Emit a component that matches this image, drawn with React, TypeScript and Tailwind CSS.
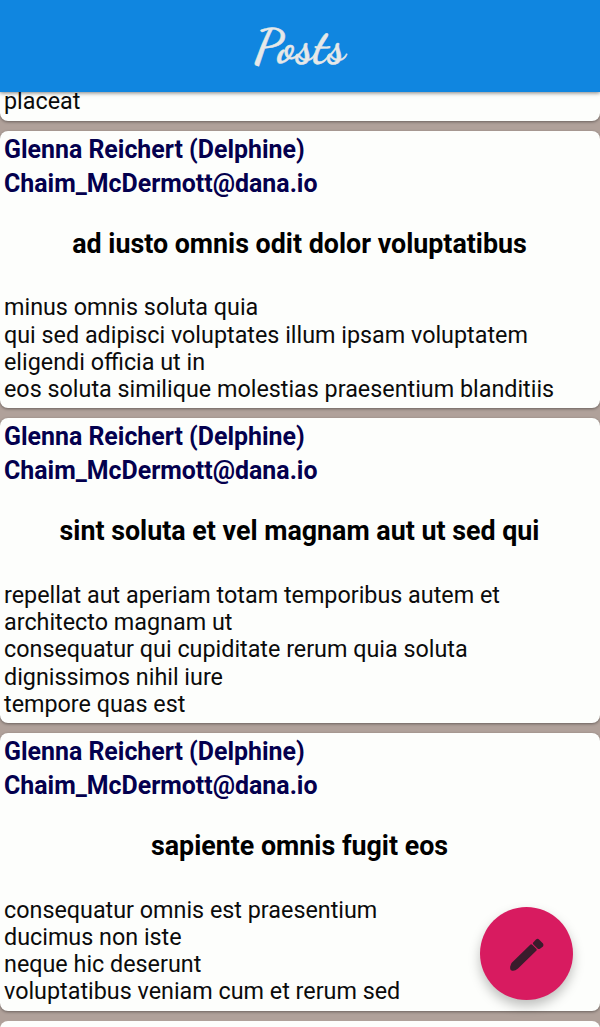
type Post = { title: string; body: string[] };

const posts: Post[] = [
  {
    title: "ad iusto omnis odit dolor voluptatibus",
    body: [
      "minus omnis soluta quia",
      "qui sed adipisci voluptates illum ipsam voluptatem",
      "eligendi officia ut in",
      "eos soluta similique molestias praesentium blanditiis",
    ],
  },
  {
    title: "sint soluta et vel magnam aut ut sed qui",
    body: [
      "repellat aut aperiam totam temporibus autem et",
      "architecto magnam ut",
      "consequatur qui cupiditate rerum quia soluta",
      "dignissimos nihil iure",
      "tempore quas est",
    ],
  },
  {
    title: "sapiente omnis fugit eos",
    body: [
      "consequatur omnis est praesentium",
      "ducimus non iste",
      "neque hic deserunt",
      "voluptatibus veniam cum et rerum sed",
    ],
  },
];

function PostCard({ title, body }: Post) {
  return (
    <article className="shrink-0 rounded-lg bg-[#fdfefc] px-1 pb-[4.8px] pt-[2.1px] shadow-[0_1px_3px_rgba(0,0,0,0.4)]">
      <div className="whitespace-nowrap text-[24.9px] font-bold leading-[34px] text-[#04004e]">
        <p>Glenna Reichert (Delphine)</p>
        <p>Chaim_McDermott@dana.io</p>
      </div>
      <h2 className="mb-[33.5px] mt-[25.8px] whitespace-nowrap pr-px text-center text-[26.82px] font-bold leading-[34px] text-black">
        {title}
      </h2>
      <div className="whitespace-nowrap text-[23.34px] leading-[27.3px] text-[#0b0b0b]">
        {body.map((line) => (
          <p key={line}>{line}</p>
        ))}
      </div>
    </article>
  );
}

export default function App() {
  return (
    <div className="relative flex h-[1027px] w-[600px] flex-col overflow-hidden bg-[#b0a19a] font-['Roboto',sans-serif]">
      <header className="z-10 flex h-[92px] shrink-0 items-center justify-center bg-[#1086e0] pt-0.5 shadow-[0_1px_4px_rgba(0,0,0,0.5)]">
        <h1 className="-skew-x-3 font-['Dancing_Script',cursive] text-[48px] font-bold leading-none tracking-[0.6px] text-[#e6e8e8] [-webkit-text-stroke:0.5px_#e6e8e8]">
          Posts
        </h1>
      </header>
      <main className="flex flex-col gap-[10.1px]">
        <div className="h-[28.8px] shrink-0 rounded-b-lg bg-[#fdfefc] px-1 text-[23.34px] leading-[19px] text-[#0b0b0b] shadow-[0_1px_3px_rgba(0,0,0,0.4)]">
          placeat
        </div>
        {posts.map((post) => (
          <PostCard key={post.title} {...post} />
        ))}
        <div className="h-8 shrink-0 rounded-t-lg bg-[#fdfefc]" />
      </main>
      <button
        aria-label="Write post"
        className="absolute left-[480px] top-[907px] flex size-[93px] items-center justify-center rounded-full bg-[#d81b60] shadow-[0_6px_12px_rgba(0,0,0,0.25)]"
      >
        <svg viewBox="0 0 36 36" className="size-9" fill="#3a1c2c">
          <path d="M2.5 27 21.5 8.5Q22.5 8 23.5 9L27.5 13Q28 14 27.5 14.5L9 32.5Q5.5 35.5 2.5 34.5Q.8 34 1.2 30.5Z" />
          <path d="M24 6.8 27 3.6Q28.6 2.2 30 3.4L34 7.6Q35 9 34 10.4L31 12.7Q29.5 13.4 28.5 12.4L24.4 8.5Q23.4 7.6 24 6.8Z" />
        </svg>
      </button>
    </div>
  );
}
